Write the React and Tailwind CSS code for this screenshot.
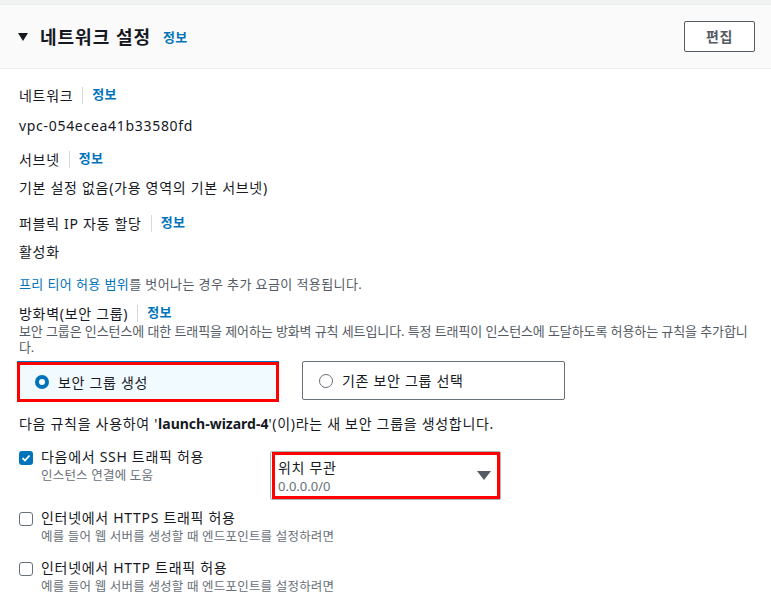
import React from 'react';

const font = { fontFamily: '"Noto Sans", "Noto Sans CJK KR", sans-serif' };

function Info({ className = '' }) {
    return <span className={`text-[13px] font-semibold tracking-[0.3px] text-[#0073bb] ${className}`}>정보</span>;
}

function Label({ children }) {
    return (
        <div className="flex items-center h-5 text-[14px] tracking-[0.7px] text-[#16191f]">
            <span>{children}</span>
            <span className="mx-[9px] w-px h-[17px] bg-[#d5dbdb]" />
            <Info />
        </div>
    );
}

function Checkbox({ checked }) {
    if (checked) {
        return (
            <span className="w-[14px] h-[14px] rounded-[3px] bg-[#0073bb] flex items-center justify-center shrink-0">
                <svg width="10" height="10" viewBox="0 0 10 10">
                    <path d="M1.5 5.2 L4 7.5 L8.5 2.5" fill="none" stroke="white" strokeWidth="1.8" />
                </svg>
            </span>
        );
    }
    return <span className="block w-[14px] h-[14px] rounded-[3px] border-[1.5px] border-[#687078] bg-white shrink-0" />;
}

function CheckRow({ checked, label, sub, className = '' }) {
    return (
        <div className={`flex ${className}`}>
            <div className="w-[22px] pt-[4px]">
                <Checkbox checked={checked} />
            </div>
            <div>
                <div className="h-5 leading-5 text-[14px] tracking-[0.7px] text-[#16191f]">{label}</div>
                <div className="h-4 leading-4 text-[12.5px] tracking-[0.2px] text-[#687078] mt-[1px]">{sub}</div>
            </div>
        </div>
    );
}

export default function App() {
    return (
        <div className="w-[771px] h-[616px] bg-white overflow-hidden" style={font}>
            <div className="h-[4px] bg-[#f2f3f3]" />
            <div className="h-[65px] bg-[#fafafa] border-y border-[#eaeded] flex items-center pl-[18px] pr-[16px]">
                <svg width="10" height="8" viewBox="0 0 10 8" className="mr-[12px] mt-[1px]">
                    <path d="M0 0 L10 0 L5 8 Z" fill="#16191f" />
                </svg>
                <h2 className="text-[18px] font-bold tracking-[1px] text-[#16191f] leading-6">네트워크 설정</h2>
                <Info className="ml-[12px] mt-[2px]" />
                <button className="ml-auto w-[71px] h-[31px] border border-[#545b64] rounded-[2px] bg-white text-[14px] font-bold tracking-[0.5px] text-[#545b64]">
                    편집
                </button>
            </div>

            <div className="px-[19px]">
                <div className="mt-[16px]"><Label>네트워크</Label></div>
                <div className="mt-[11px] h-5 leading-5 text-[14px] tracking-[0.7px] text-[#16191f]">vpc-054ecea41b33580fd</div>
                <div className="mt-[13px]"><Label>서브넷</Label></div>
                <div className="mt-[9px] h-5 leading-5 text-[14px] tracking-[0.7px] text-[#16191f]">기본 설정 없음(가용 영역의 기본 서브넷)</div>
                <div className="mt-[15px]"><Label>퍼블릭 IP 자동 할당</Label></div>
                <div className="mt-[9px] h-5 leading-5 text-[14px] tracking-[0.7px] text-[#16191f]">활성화</div>
                <div className="mt-[14px] h-4 leading-4 text-[13px] tracking-[0.4px] text-[#545b64]">
                    <span className="text-[#0073bb]">프리 티어 허용 범위</span>를 벗어나는 경우 추가 요금이 적용됩니다.
                </div>
                <div className="mt-[11px]"><Label>방화벽(보안 그룹)</Label></div>
                <div className="leading-4 text-[13px] tracking-[-0.1px] text-[#545b64]">
                    보안 그룹은 인스턴스에 대한 트래픽을 제어하는 방화벽 규칙 세트입니다. 특정 트래픽이 인스턴스에 도달하도록 허용하는 규칙을 추가합니다.
                </div>

                <div className="mt-[7px] flex items-start">
                    <div className="ml-[-2px] w-[262px] h-[40px] border-[3px] border-[#ff0000] bg-[#f1faff] shadow-[0_-1px_0_#0073bb] flex items-center pl-[15px]">
                        <span className="w-[14px] h-[14px] rounded-full border-[4px] border-[#0073bb] bg-white mr-[9px]" />
                        <span className="text-[14px] tracking-[0.7px] text-[#16191f]">보안 그룹 생성</span>
                    </div>
                    <div className="ml-[23px] w-[263px] h-[39px] border border-[#687078] rounded-[2px] flex items-center pl-[16px] mt-[-1px]">
                        <span className="w-[14px] h-[14px] rounded-full border-[1.5px] border-[#687078] bg-white mr-[9px]" />
                        <span className="text-[14px] tracking-[0.7px] text-[#16191f]">기존 보안 그룹 선택</span>
                    </div>
                </div>

                <div className="mt-[12px] h-5 leading-5 text-[14px] tracking-[0.7px] text-[#16191f]">
                    다음 규칙을 사용하여 '<b className="tracking-normal">launch-wizard-4</b>'(이)라는 새 보안 그룹을 생성합니다.
                </div>

                <div className="mt-[13px] flex items-start">
                    <CheckRow checked label="다음에서 SSH 트래픽 허용" sub="인스턴스 연결에 도움" className="w-[251px]" />
                    <div className="mt-[4px] w-[231px] h-[49px] border border-[#aab7b8] rounded-[2px] pl-[1px]">
                        <div className="h-[47px] border-[3px] border-[#ff0000] flex items-center pl-[3px] pr-[6px]">
                            <div className="flex-1">
                                <div className="h-5 leading-5 text-[14px] tracking-[0.7px] text-[#16191f]">위치 무관</div>
                                <div className="h-4 leading-4 text-[13px] text-[#687078]">0.0.0.0/0</div>
                            </div>
                            <svg width="14" height="9" viewBox="0 0 14 9">
                                <path d="M0 0 L14 0 L7 9 Z" fill="#545b64" />
                            </svg>
                        </div>
                    </div>
                </div>

                <CheckRow label="인터넷에서 HTTPS 트래픽 허용" sub="예를 들어 웹 서버를 생성할 때 엔드포인트를 설정하려면" className="mt-[8px]" />
                <CheckRow label="인터넷에서 HTTP 트래픽 허용" sub="예를 들어 웹 서버를 생성할 때 엔드포인트를 설정하려면" className="mt-[13px]" />
            </div>
        </div>
    );
}
